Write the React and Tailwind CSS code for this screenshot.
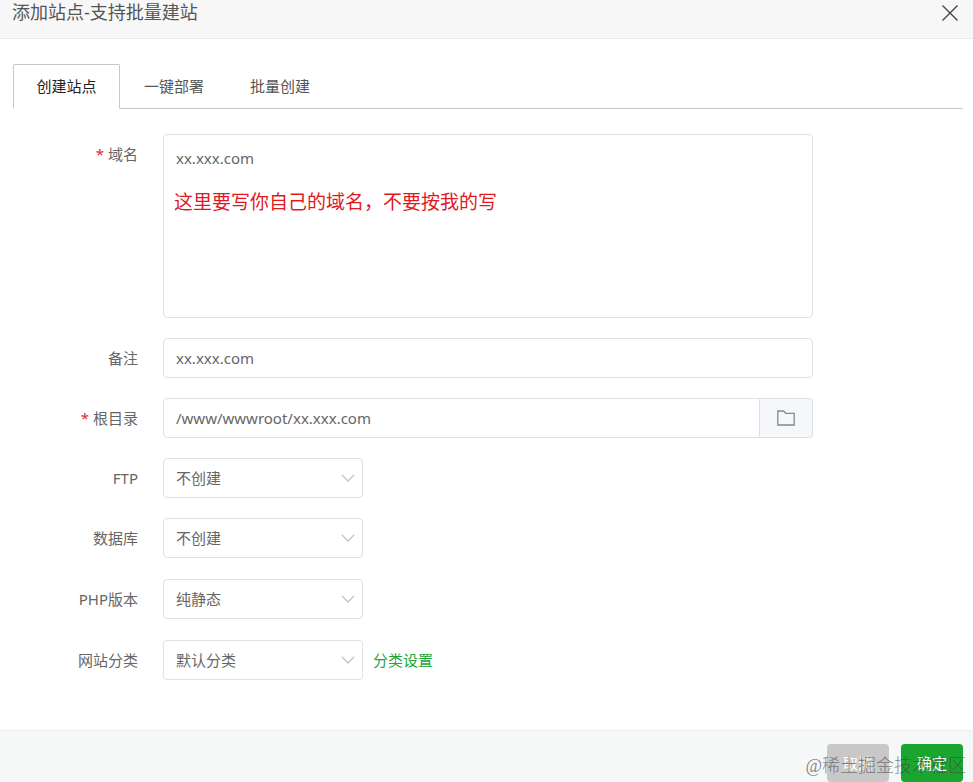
import React, { useState } from 'react';

const tabs = ['创建站点', '一键部署', '批量创建'];

const selectFields = [
  { id: 'ftp', label: 'FTP', options: ['不创建', '创建'], spacing: 'mb-5' },
  { id: 'database', label: '数据库', options: ['不创建', 'MySQL', 'MongoDB'], spacing: 'mb-[21px]' },
  { id: 'php', label: 'PHP版本', options: ['纯静态', 'PHP-74', 'PHP-80'], spacing: 'mb-[21px]' },
  { id: 'category', label: '网站分类', options: ['默认分类'], spacing: 'mb-[50px]', link: '分类设置' }
];

const FormRow = ({ id, label, required, spacing = 'mb-5', children }) => (
  <div className={`flex items-start ${spacing}`}>
    <label htmlFor={id} className="w-[138px] shrink-0 mr-[25px] text-right leading-10">
      {required && <span className="text-[#e0282e] mr-1">*</span>}
      {label}
    </label>
    {children}
  </div>
);

const SelectBox = ({ id, options }) => (
  <div className="relative w-[200px]">
    <select
      id={id}
      className="block w-full h-10 appearance-none rounded border border-[#dfe0e3] bg-white px-3 pr-8 outline-none focus:border-[#20a53a]"
    >
      {options.map((option) => (
        <option key={option}>{option}</option>
      ))}
    </select>
    <svg
      viewBox="0 0 14 8"
      className="pointer-events-none absolute right-2 top-4 w-3.5 h-2"
      fill="none"
      stroke="#c0c4cc"
      strokeWidth="1.3"
    >
      <path d="M0.8 0.8L7 7L13.2 0.8" />
    </svg>
  </div>
);

const App = () => {
  const [activeTab, setActiveTab] = useState(0);
  const [domain, setDomain] = useState('xx.xxx.com');
  const [remark, setRemark] = useState('xx.xxx.com');
  const [path, setPath] = useState('/www/wwwroot/xx.xxx.com');

  return (
    <div className="min-h-screen flex flex-col bg-white text-[15px] text-[#666] font-['Noto_Sans','Noto_Sans_CJK_SC',sans-serif]">
      <header className="flex items-start justify-between border-b border-[#eaeaea] bg-[#f7f7f7] pl-3 pr-[14px] pb-[14px]">
        <h1 className="text-lg leading-6 text-[#555]">添加站点-支持批量建站</h1>
        <button type="button" aria-label="关闭" className="pt-1">
          <svg viewBox="0 0 18 18" className="w-[18px] h-[18px]" fill="none" stroke="#444" strokeWidth="1.4">
            <path d="M1.5 1.5L16.5 16.5M16.5 1.5L1.5 16.5" />
          </svg>
        </button>
      </header>

      <main className="flex-1 pt-[25px]">
        <nav className="ml-[13px] mr-[10px] mb-[25px] flex gap-[2px] border-b border-[#c8c8c8]">
          {tabs.map((tab, index) => (
            <button
              key={tab}
              type="button"
              onClick={() => setActiveTab(index)}
              className={
                index === activeTab
                  ? '-mb-px w-[107px] h-[45px] rounded-t-xs border border-b-white border-[#c8c8c8] bg-white text-[#222]'
                  : 'h-11 px-[22px] text-[#555]'
              }
            >
              {tab}
            </button>
          ))}
        </nav>

        <form className="pr-5">
          <FormRow id="domain" label="域名" required>
            <div className="relative flex-1 max-w-[650px]">
              <textarea
                id="domain"
                value={domain}
                onChange={(e) => setDomain(e.target.value)}
                className="block w-full h-[184px] resize-none rounded border border-[#dfe0e3] px-3 py-3 leading-[22px] outline-none focus:border-[#20a53a]"
              />
              <p className="pointer-events-none absolute left-[11px] top-[54px] text-[19px] leading-7 text-[#e0191f]">
                这里要写你自己的域名，不要按我的写
              </p>
            </div>
          </FormRow>

          <FormRow id="remark" label="备注">
            <input
              id="remark"
              type="text"
              value={remark}
              onChange={(e) => setRemark(e.target.value)}
              className="flex-1 min-w-0 max-w-[650px] h-10 rounded border border-[#dfe0e3] px-3 outline-none focus:border-[#20a53a]"
            />
          </FormRow>

          <FormRow id="path" label="根目录" required>
            <div className="flex flex-1 max-w-[650px] h-10">
              <input
                id="path"
                type="text"
                value={path}
                onChange={(e) => setPath(e.target.value)}
                className="flex-1 min-w-0 rounded-l border border-[#dfe0e3] px-3 outline-none focus:border-[#20a53a]"
              />
              <button
                type="button"
                aria-label="选择目录"
                className="flex w-[53px] items-center justify-center rounded-r border border-l-0 border-[#dfe0e3] bg-[#f5f7fa]"
              >
                <svg viewBox="0 0 18 16" className="w-[18px] h-4" fill="none" stroke="#85888e" strokeWidth="1.3">
                  <path d="M0.8 1H6.6L8.8 3.4H17.2V15H0.8Z" />
                </svg>
              </button>
            </div>
          </FormRow>

          {selectFields.map((field) => (
            <FormRow key={field.id} id={field.id} label={field.label} spacing={field.spacing}>
              <SelectBox id={field.id} options={field.options} />
              {field.link && (
                <a href="#category" className="ml-[10px] leading-10 text-[#20a53a]">
                  {field.link}
                </a>
              )}
            </FormRow>
          ))}
        </form>
      </main>

      <footer className="relative flex justify-end gap-3 border-t border-[#eceeee] bg-[#f6f8f8] pt-[13px] pr-[10px]">
        <button type="button" className="w-[62px] h-[38px] rounded bg-[#c8c8c8] text-white">
          取消
        </button>
        <button type="button" className="w-[62px] h-[38px] rounded bg-[#1aa52f] text-white">
          确定
        </button>
        <span className="pointer-events-none absolute right-[7px] bottom-1 text-lg leading-6 font-light text-[#444]/65 font-['Liberation_Serif','Noto_Sans_CJK_SC',serif]">
          @稀土掘金技术社区
        </span>
      </footer>
    </div>
  );
};

export default App;
